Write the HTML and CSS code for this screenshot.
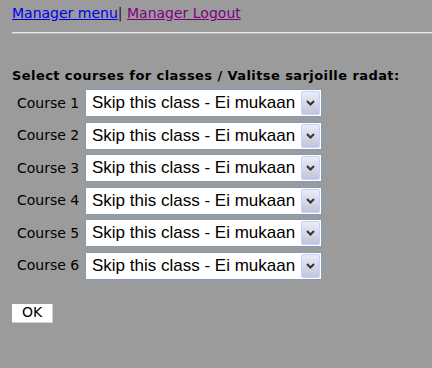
FILE: index.html
```html
<!DOCTYPE html>
<html>
<head>
<meta charset="utf-8">
<link rel="stylesheet" href="styles.css">
</head>
<body>
<div class="nav"><a class="link" href="#">Manager menu</a><span class="sep">|</span> <a class="link visited" href="#">Manager Logout</a></div>
<div class="rule"></div>
<form class="form">
  <h1 class="title">Select courses for classes / Valitse sarjoille radat:</h1>
  <div class="rows">
    <label class="lbl">Course 1</label><div class="sel"><span class="val">Skip this class - Ei mukaan</span><span class="btn"><svg width="9" height="6" viewBox="0 0 9 6"><path d="M1 1 L4.5 4.5 L8 1" fill="none" stroke="#333" stroke-width="2"/></svg></span></div>
    <label class="lbl">Course 2</label><div class="sel"><span class="val">Skip this class - Ei mukaan</span><span class="btn"><svg width="9" height="6" viewBox="0 0 9 6"><path d="M1 1 L4.5 4.5 L8 1" fill="none" stroke="#333" stroke-width="2"/></svg></span></div>
    <label class="lbl">Course 3</label><div class="sel"><span class="val">Skip this class - Ei mukaan</span><span class="btn"><svg width="9" height="6" viewBox="0 0 9 6"><path d="M1 1 L4.5 4.5 L8 1" fill="none" stroke="#333" stroke-width="2"/></svg></span></div>
    <label class="lbl">Course 4</label><div class="sel"><span class="val">Skip this class - Ei mukaan</span><span class="btn"><svg width="9" height="6" viewBox="0 0 9 6"><path d="M1 1 L4.5 4.5 L8 1" fill="none" stroke="#333" stroke-width="2"/></svg></span></div>
    <label class="lbl">Course 5</label><div class="sel"><span class="val">Skip this class - Ei mukaan</span><span class="btn"><svg width="9" height="6" viewBox="0 0 9 6"><path d="M1 1 L4.5 4.5 L8 1" fill="none" stroke="#333" stroke-width="2"/></svg></span></div>
    <label class="lbl">Course 6</label><div class="sel"><span class="val">Skip this class - Ei mukaan</span><span class="btn"><svg width="9" height="6" viewBox="0 0 9 6"><path d="M1 1 L4.5 4.5 L8 1" fill="none" stroke="#333" stroke-width="2"/></svg></span></div>
  </div>
  <button class="ok" type="button">OK</button>
</form>
</body>
</html>
```
FILE: styles.css
```css
html, body {
  margin: 0;
  padding: 0;
  background: #9b9b9b;
}
body {
  font-family: "DejaVu Sans", Verdana, sans-serif;
  font-size: 14px;
  color: #000;
  padding-left: 12px;
}
.nav {
  padding-top: 5px;
  height: 20px;
  line-height: 17px;
}
.link {
  color: #0000ee;
  text-decoration: underline;
}
.visited {
  color: #800080;
}
.sep {
  color: #1a1a1a;
}
.rule {
  margin-top: 7px;
  height: 1px;
  background: #e6e6e6;
  border-bottom: 1px solid #b8b8b8;
}
.form {
  margin: 0;
  padding-top: 34px;
}
.title {
  margin: 0 0 5px 0;
  font-size: 13px;
  letter-spacing: 0.42px;
  font-weight: bold;
  line-height: 16px;
}
.rows {
  display: grid;
  grid-template-columns: 73px auto;
  row-gap: 4.6px;
  align-items: center;
  justify-content: start;
}
.lbl {
  padding-left: 5px;
  line-height: 17px;
}
.sel {
  position: relative;
  width: 235px;
  height: 26px;
  border: 1px solid #7f9db9;
  background: #fff;
  display: flex;
  align-items: center;
}
.val {
  font-family: "Liberation Sans", Arial, sans-serif;
  font-size: 17px;
  padding-left: 6px;
  white-space: nowrap;
}
.btn {
  position: absolute;
  right: 1px;
  top: 1px;
  width: 17px;
  height: 22px;
  border: 1px solid #c3d3fd;
  border-radius: 2px;
  background: linear-gradient(#ececf6, #c4c4da);
  display: flex;
  align-items: center;
  justify-content: center;
}
.ok {
  margin-top: 24px;
  width: 41px;
  height: 19px;
  padding: 0;
  border: none;
  border-right: 1px solid #d0d0d0;
  border-bottom: 1px solid #d0d0d0;
  background: #fff;
  font-family: "DejaVu Sans", Verdana, sans-serif;
  font-size: 14px;
  color: #000;
  line-height: 17px;
}
```
